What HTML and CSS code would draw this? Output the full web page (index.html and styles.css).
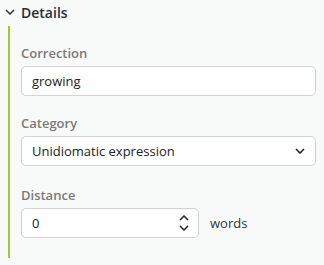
FILE: index.html
```html
<!DOCTYPE html>
<html lang="en">
<head>
    <meta charset="UTF-8">
    <meta name="viewport" content="width=device-width, initial-scale=1.0">
    <title>Details</title>
    <link rel="stylesheet" href="styles.css">
</head>
<body>

    <div class="panel">
        <div class="panel-head">
            <svg class="chev" width="10" height="6" viewBox="0 0 10 6"><path d="M1 1l4 4 4-4" fill="none" stroke="#333" stroke-width="1.5"/></svg>
            <span>Details</span>
        </div>

        <div class="panel-body">
            <div class="field">
                <label>Correction</label>
                <div class="box">growing</div>
            </div>

            <div class="field">
                <label>Category</label>
                <div class="box select">
                    <span>Unidiomatic expression</span>
                    <svg width="10" height="6" viewBox="0 0 10 6"><path d="M1 1l4 4 4-4" fill="none" stroke="#222" stroke-width="1.5"/></svg>
                </div>
            </div>

            <div class="field">
                <label>Distance</label>
                <div class="row">
                    <div class="box number">
                        <span>0</span>
                        <svg width="10" height="16" viewBox="0 0 10 16"><path d="M1 5l4-4 4 4M1 11l4 4 4-4" fill="none" stroke="#222" stroke-width="1.5"/></svg>
                    </div>
                    <span class="unit">words</span>
                </div>
            </div>
        </div>
    </div>

</body>
</html>
```

FILE: styles.css
```css
body {
    font-family: 'Open Sans', 'Noto Sans', sans-serif;
    background-color: #f8f9f9;
    color: #222;
    margin: 0;
    padding: 0;
}

.panel {
    padding: 3px 8px 7px 8px;
}

.panel-head {
    display: flex;
    align-items: center;
    gap: 6px;
    height: 18px;
    font-size: 14px;
    font-weight: 600;
    color: #2a2d3a;
}

.chev {
    margin-left: -3px;
}

.panel-body {
    margin-top: 5px;
    border-left: 2px solid #a3c83a;
    padding: 18px 0 20px 11px;
}

.field {
    margin-bottom: 18px;
}

.field:last-child {
    margin-bottom: 0;
    margin-top: 20px;
}

label {
    display: block;
    font-size: 13px;
    font-weight: 600;
    color: #7a7a7a;
    line-height: 18px;
    margin-bottom: 4px;
}

.box {
    box-sizing: border-box;
    height: 30px;
    background-color: white;
    border: 1px solid #d2d2d2;
    border-radius: 5px;
    padding: 0 10px;
    font-size: 13px;
    display: flex;
    align-items: center;
    justify-content: space-between;
}

.row {
    display: flex;
    align-items: center;
    gap: 11px;
}

.number {
    width: 178px;
    padding-right: 9px;
}

.unit {
    font-size: 13px;
    color: #333;
}
```
